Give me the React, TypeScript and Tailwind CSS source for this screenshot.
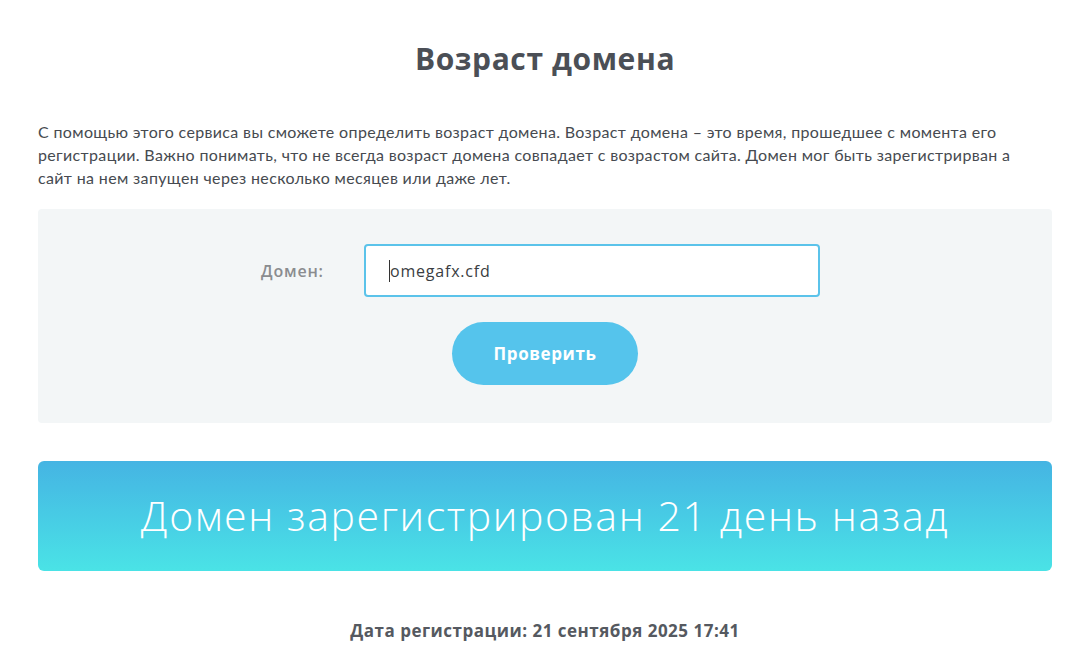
import React from "react";

export default function App() {
  return (
    <div className="min-h-screen bg-white">
      <div className="ml-[38px] w-[1014px] pt-[38px] pb-10">
        <h1 className="text-center text-[30px] leading-[42px] font-bold tracking-[0.6px] text-[#4b4f56] font-['Open_Sans',sans-serif]">
          Возраст домена
        </h1>
        <p className="mt-[40px] text-[16px] leading-[23px] tracking-[0.35px] text-[#464a50] font-['Lato',sans-serif]">
          С помощью этого сервиса вы сможете определить возраст домена. Возраст домена – это время, прошедшее с момента его
          <br />
          регистрации. Важно понимать, что не всегда возраст домена совпадает с возрастом сайта. Домен мог быть зарегистрирван а
          <br />
          сайт на нем запущен через несколько месяцев или даже лет.
        </p>
        <div className="mt-[20px] h-[214px] rounded-[4px] bg-[#f3f6f7] flex flex-col pt-[35px]">
          <div className="flex items-center pl-[223px]">
            <div className="w-[103px] text-[16px] font-semibold tracking-[0.8px] text-[#8a8c8f] font-['Open_Sans',sans-serif]">
              Домен:
            </div>
            <div className="w-[456px] h-[53px] rounded-[4px] border-2 border-[#5bc3ea] bg-white flex items-center pl-[23px] text-[16px] tracking-[0.8px] text-[#3a3d42] font-['Open_Sans',sans-serif]">
              <span className="w-px h-[22px] bg-[#333]"></span>
              omegafx.cfd
            </div>
          </div>
          <div className="flex justify-center">
            <button className="mt-[25px] w-[186px] h-[63px] rounded-full bg-[#55c4ec] text-white text-[17px] tracking-[0.6px] font-bold font-['Open_Sans',sans-serif]">
              Проверить
            </button>
          </div>
        </div>
        <div className="mt-[38px] h-[110px] rounded-[6px] bg-gradient-to-b from-[#45b4e3] to-[#4ae3e6] flex items-center justify-center">
          <span className="text-white text-[41px] font-light font-['Open_Sans',sans-serif] tracking-[1.6px]">
            Домен зарегистрирован 21 день назад
          </span>
        </div>
        <div className="mt-[47px] text-center text-[17px] font-bold tracking-[0.5px] text-[#555960] font-['Open_Sans',sans-serif]">
          Дата регистрации: 21 сентября 2025 17:41
        </div>
      </div>
    </div>
  );
}
